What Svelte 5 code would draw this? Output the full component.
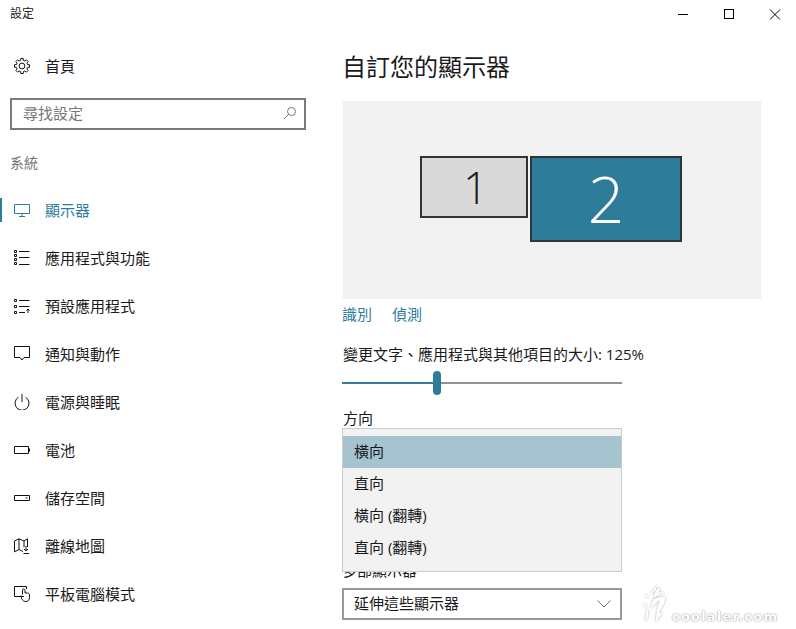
<script>
  const items = [
    { label: '顯示器', icon: 'monitor', active: true },
    { label: '應用程式與功能', icon: 'apps' },
    { label: '預設應用程式', icon: 'defaults' },
    { label: '通知與動作', icon: 'notify' },
    { label: '電源與睡眠', icon: 'power' },
    { label: '電池', icon: 'battery' },
    { label: '儲存空間', icon: 'storage' },
    { label: '離線地圖', icon: 'map' },
    { label: '平板電腦模式', icon: 'tablet' }
  ];
  const options = ['橫向', '直向', '橫向 (翻轉)', '直向 (翻轉)'];

  const gear = (() => {
    const pts = [];
    const teeth = 8;
    for (let i = 0; i < teeth; i++) {
      const a = (i / teeth) * Math.PI * 2 - Math.PI / 2;
      const w = Math.PI / teeth;
      [[7.6, -0.42], [7.6, 0.42], [5.7, 0.62], [5.7, 1.38]].forEach(([r, f]) => {
        const t = a + f * w;
        pts.push((8 + r * Math.cos(t)).toFixed(2) + ' ' + (8 + r * Math.sin(t)).toFixed(2));
      });
    }
    return 'M' + pts.join('L') + 'Z';
  })();
</script>

<div class="window">
  <header class="titlebar">
    <span class="title">設定</span>
    <div class="controls">
      <svg width="46" height="30" viewBox="0 0 46 30"><path d="M18 14.5H28" /></svg>
      <svg width="46" height="30" viewBox="0 0 46 30"><rect x="18.5" y="9.5" width="9" height="9" /></svg>
      <svg width="46" height="30" viewBox="0 0 46 30"><path d="M18 9.5L28 19.5M28 9.5L18 19.5" /></svg>
    </div>
  </header>

  <div class="body">
    <aside class="sidebar">
      <div class="row home">
        <svg class="icon" viewBox="0 0 16 16"><path d={gear} /><circle cx="8" cy="8" r="2.9" /></svg>
        <span>首頁</span>
      </div>
      <div class="search">
        <span>尋找設定</span>
        <svg class="search-icon" viewBox="0 0 14 14"><circle cx="8.5" cy="5.5" r="4" /><path d="M5.6 8.4L1 13" /></svg>
      </div>
      <div class="section">系統</div>
      <nav>
        {#each items as item}
          <div class="row" class:active={item.active}>
            <svg class="icon" viewBox="0 0 16 16">
              {#if item.icon === 'monitor'}
                <path d="M.5 2.5H15.5V11.5H.5ZM8 11.5V14M5 14.5H11" />
              {:else if item.icon === 'apps'}
                <path d="M5 1.5H15.5M5 7.5H15.5M5 14.5H15.5" />
                <path d="M.5 .5H2.5V2.5H.5ZM.5 4.5H2.5V6.5H.5ZM.5 8.5H2.5V10.5H.5ZM.5 12.5H2.5V14.5H.5Z" />
              {:else if item.icon === 'defaults'}
                <path d="M5 2.5H15.5M5 8.5H15.5M5 14.5H11M14 15V11M12.5 12.5L14 11L15.5 12.5" />
                <path d="M.5 1.5H2.5V3.5H.5ZM.5 7.5H2.5V9.5H.5ZM.5 13.5H2.5V15.5H.5Z" />
              {:else if item.icon === 'notify'}
                <path d="M.5 .5H15.5V11.5H10L8 14L6 11.5H.5Z" />
              {:else if item.icon === 'power'}
                <path d="M4.5 3.2A7 7 0 1 0 11.5 3.2M8 0V8" />
              {:else if item.icon === 'battery'}
                <path d="M.5 4.5H14.5V11.5H.5ZM15.5 6.5V9.5" />
              {:else if item.icon === 'storage'}
                <path d="M.5 5.5H15.5V10.5H.5ZM11.5 8H13.5" />
              {:else if item.icon === 'map'}
                <path d="M.5 3L5 .8L10 3L13.5 .8V9M.5 3V13.8L5 11.5L9 13.5M5 .8V11.5M10 3V9M12 8V13M10 11L12 13L14 11M9.5 15.5H15" />
              {:else if item.icon === 'tablet'}
                <path d="M10 10.5H.5V.5H12.5V3" />
                <path d="M8.5 8.5V4.3C8.5 2.5 11 2.5 11 4.3V7H13.5C15 7 15.5 8 15.5 9V11.5C15.5 14 14 15.5 12 15.5C10 15.5 8.5 14.5 7.5 12.5L7 9.5" />
              {/if}
            </svg>
            <span>{item.label}</span>
          </div>
        {/each}
      </nav>
    </aside>

    <main class="main">
      <h1>自訂您的顯示器</h1>
      <div class="preview">
        <div class="monitor one">1</div>
        <div class="monitor two">2</div>
      </div>
      <div class="links"><span>識別</span><span>偵測</span></div>
      <div class="scale">變更文字、應用程式與其他項目的大小: 125%</div>
      <div class="slider">
        <div class="fill"></div>
        <div class="thumb"></div>
        <div class="rest"></div>
      </div>
      <div class="orient">方向</div>
      <div class="field">
        <div class="popup">
          {#each options as option, i}
            <div class="option" class:selected={i === 0}>{option}</div>
          {/each}
        </div>
      </div>
      <div class="multi">多部顯示器</div>
      <div class="select">
        <span>延伸這些顯示器</span>
        <svg class="chev" viewBox="0 0 14 8"><path d="M.5 .5L7 7L13.5 .5" /></svg>
      </div>
    </main>
  </div>

  <div class="watermark">
    <svg class="mark" viewBox="0 0 34 50">
      <path d="M18 2C16 8 11 12 8 14C12 13 18 10 22 6C21 10 20 11 19 13C22 12 25 12 27 12C22 14 15 17 11 22C16 19 24 17 28 18C27 24 24 30 20 36L24 36L16 48C17 38 17 30 21 22C16 24 13 28 11 32C10 28 11 26 13 22Z" />
      <path d="M3 15C5 15 7 16 8 18C6 19 4 18 3 15ZM2 26C5 27 6 29 6 31C4 31 2 29 2 26ZM5 46C3 42 4 36 7 32C8 38 7 42 5 46Z" />
    </svg>
    <span>coolaler.com</span>
  </div>
</div>

<style>
  :global(body) {
    margin: 0;
    background: #fff;
  }

  .window {
    position: relative;
    width: 796px;
    height: 629px;
    overflow: hidden;
    background: #fff;
    color: #1a1a1a;
    font-family: "Open Sans", "Noto Sans CJK TC", sans-serif;
    font-size: 15px;
    line-height: 20px;
  }

  .titlebar {
    display: flex;
    justify-content: space-between;
    height: 30px;
  }

  .title {
    padding: 4px 0 0 10px;
    font-size: 12px;
    line-height: 20px;
  }

  .controls {
    display: flex;
    margin-right: -2px;
  }

  .controls svg {
    display: block;
    fill: none;
    stroke: #000;
    stroke-width: 1;
  }

  .body {
    display: flex;
  }

  .sidebar {
    flex: 0 0 342px;
  }

  .row {
    position: relative;
    display: flex;
    align-items: center;
    gap: 15px;
    height: 48px;
    padding-left: 14px;
  }

  .home {
    margin-top: 12px;
  }

  .icon {
    flex: none;
    width: 16px;
    height: 16px;
    fill: none;
    stroke: #111;
    stroke-width: 1;
  }

  .active {
    color: #2d7d9a;
  }

  .active .icon {
    stroke: #2d7d9a;
  }

  .active::before {
    content: "";
    position: absolute;
    left: 0;
    top: 12px;
    width: 2px;
    height: 24px;
    background: #2d7d9a;
  }

  .search {
    display: flex;
    align-items: center;
    justify-content: space-between;
    box-sizing: border-box;
    width: 296px;
    height: 32px;
    margin: 8px 0 0 10px;
    padding: 0 7px 2px 11px;
    border: 2px solid #7a7a7a;
    color: #767676;
  }

  .search-icon {
    width: 14px;
    height: 14px;
    fill: none;
    stroke: #767676;
    stroke-width: 1;
  }

  .section {
    margin: 23px 0 13px 10px;
    color: #767676;
    font-size: 14px;
  }

  .main {
    flex: 1;
  }

  h1 {
    margin: 21px 0 18px;
    font-size: 24px;
    font-weight: 400;
    line-height: 32px;
  }

  .preview {
    display: flex;
    align-items: flex-start;
    gap: 2px;
    box-sizing: border-box;
    width: 418px;
    height: 198px;
    margin-left: 1px;
    padding: 55px 0 0 77px;
    background: #f2f2f2;
  }

  .monitor {
    display: flex;
    align-items: center;
    justify-content: center;
    box-sizing: border-box;
    border: 2px solid #333;
    font-family: "Open Sans", sans-serif;
    font-weight: 300;
  }

  .one {
    width: 108px;
    height: 62px;
    padding-left: 3px;
    background: #d9d9d9;
    font-size: 44px;
    line-height: 1;
  }

  .two {
    width: 152px;
    height: 86px;
    background: #2d7d9a;
    color: #fff;
    font-size: 64px;
    line-height: 1;
  }

  .links {
    display: flex;
    gap: 20px;
    margin-top: 5px;
    color: #2d7d9a;
  }

  .scale {
    margin: 20px 0 0 1px;
  }

  .slider {
    display: flex;
    align-items: center;
    width: 280px;
    height: 24px;
    margin-top: 7px;
  }

  .fill {
    width: 91px;
    height: 2px;
    background: #2d7d9a;
  }

  .thumb {
    width: 8px;
    height: 24px;
    border-radius: 4px;
    background: #2d7d9a;
  }

  .rest {
    flex: 1;
    height: 2px;
    background: #929292;
  }

  .orient {
    margin: 13px 0 0 1px;
  }

  .field {
    position: relative;
    z-index: 1;
    width: 280px;
    height: 32px;
    margin-top: 8px;
  }

  .popup {
    position: absolute;
    top: -8px;
    left: 0;
    right: 0;
    box-sizing: border-box;
    height: 144px;
    padding: 7px 0;
    border: 1px solid #ccc;
    background: #f2f2f2;
  }

  .option {
    height: 32px;
    padding-left: 11px;
    line-height: 31px;
  }

  .selected {
    background: #a5c4d0;
  }

  .multi {
    margin-top: 92px;
  }

  .select {
    display: flex;
    align-items: center;
    justify-content: space-between;
    box-sizing: border-box;
    width: 280px;
    height: 32px;
    margin-top: 8px;
    padding: 0 9px 2px 10px;
    border: 2px solid #999;
  }

  .chev {
    width: 14px;
    height: 8px;
    margin-top: 2px;
    fill: none;
    stroke: #777;
    stroke-width: 1;
  }

  .watermark {
    position: absolute;
    left: 642px;
    top: 578px;
    display: flex;
    align-items: flex-end;
    color: #fff;
    font-family: "DejaVu Sans", sans-serif;
    font-size: 13px;
    font-weight: 700;
    line-height: 12px;
    letter-spacing: 1.2px;
    text-shadow: 0 0 2px #999, 0 0 1px #aaa;
  }

  .watermark span {
    margin: 0 0 5px 1px;
  }

  .mark {
    flex: none;
    width: 29px;
    height: 50px;
    fill: #fff;
    filter: drop-shadow(0 0 1px #aaa);
  }
</style>
